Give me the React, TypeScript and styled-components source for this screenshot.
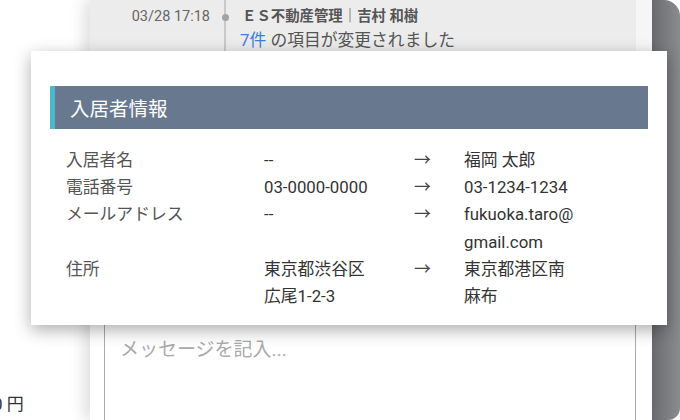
import React from 'react';
import styled, { createGlobalStyle } from 'styled-components';

const GlobalStyle = createGlobalStyle`
  html, body {
    margin: 0;
    padding: 0;
    background: #ffffff;
  }
  body {
    font-family: Roboto, "Noto Sans CJK JP", sans-serif;
  }
`;

const Screen = styled.div`
  position: relative;
  width: 680px;
  height: 420px;
  overflow: hidden;
  display: flex;
  background: #ffffff;
`;

const Backdrop = styled.div`
  width: 90px;
  flex-shrink: 0;
  display: flex;
  flex-direction: column;
  justify-content: flex-end;
  padding-bottom: 4px;
  box-sizing: border-box;
`;

const PriceText = styled.div`
  font-size: 17px;
  line-height: 24px;
  color: #333333;
  margin-left: -7px;
  white-space: nowrap;
`;

const SidePanel = styled.div`
  flex: 1;
  display: flex;
  flex-direction: column;
  background: #ffffff;
  box-shadow: -6px 0 14px rgba(0, 0, 0, 0.13);
  z-index: 1;
`;

const Timeline = styled.div`
  height: 290px;
  flex-shrink: 0;
  background: #ececec;
  border-right: 16px solid #f6f6f6;
  padding-top: 6px;
  box-sizing: border-box;
`;

const TimelineItem = styled.div`
  display: grid;
  grid-template-columns: 120px 24px 1fr;
  column-gap: 3px;
  height: 100%;
`;

const DateCell = styled.div`
  text-align: right;
  font-size: 14.5px;
  line-height: 22px;
  color: #666666;
`;

const Marker = styled.div`
  display: flex;
  justify-content: center;
  margin-top: -6px;
  background: linear-gradient(#c9c9c9, #c9c9c9) center / 2px 100% no-repeat;
`;

const Dot = styled.span`
  width: 7px;
  height: 7px;
  margin-top: 14px;
  border-radius: 50%;
  background: #a3a3a3;
`;

const ItemBody = styled.div`
  display: flex;
  flex-direction: column;
`;

const Author = styled.div`
  font-size: 14.4px;
  line-height: 22px;
  font-weight: bold;
  color: #555555;
  margin-left: 2px;
`;

const ChangeLine = styled.div`
  font-size: 16.8px;
  line-height: 24px;
  color: #555555;
`;

const Count = styled.span`
  color: #3b7fd9;
`;

const MessageArea = styled.div`
  flex: 1;
  display: flex;
  padding: 10px 16px 0 14px;
`;

const MessageInput = styled.textarea`
  flex: 1;
  resize: none;
  border: 1px solid #aaaaaa;
  border-bottom: none;
  padding: 35px 15px 0 15px;
  font-family: Roboto, "Noto Sans CJK JP", sans-serif;
  font-size: 19px;
  line-height: 28px;
  outline: none;
  &::placeholder {
    color: #aaaaaa;
  }
`;

const DarkEdge = styled.div`
  width: 28px;
  flex-shrink: 0;
  background: linear-gradient(to right, #6b6c6f, #8a8b8e);
  border-radius: 0 16px 12px 0;
`;

const Modal = styled.div`
  position: absolute;
  left: 31px;
  top: 51px;
  width: 636px;
  height: 274px;
  box-sizing: border-box;
  padding: 35px 19px 15px 19px;
  background: #ffffff;
  box-shadow: 0 5px 16px rgba(0, 0, 0, 0.32);
  z-index: 2;
`;

const SectionHeader = styled.div`
  height: 43px;
  display: flex;
  align-items: center;
  background: #68788f;
  border-left: 5px solid #4cb8cc;
  padding-left: 15px;
  font-size: 19.5px;
  color: #ffffff;
`;

const ChangeTable = styled.div`
  margin-top: 18px;
  padding-left: 16px;
  display: grid;
  grid-template-columns: 198px 150px 50px 1fr;
  font-size: 16.8px;
  line-height: 27.2px;
`;

const Label = styled.div`
  color: #555555;
`;

const Value = styled.div`
  max-width: 112px;
  color: #333333;
`;

const Arrow = styled.div`
  color: #444444;
`;

type Change = {
  label: string;
  before: React.ReactNode;
  after: React.ReactNode;
};

const changes: Change[] = [
  { label: '入居者名', before: '--', after: '福岡 太郎' },
  { label: '電話番号', before: '03-0000-0000', after: '03-1234-1234' },
  { label: 'メールアドレス', before: '--', after: <>fukuoka.taro@<wbr />gmail.com</> },
  { label: '住所', before: '東京都渋谷区広尾1-2-3', after: '東京都港区南麻布' },
];

const App: React.FC = () => {
  return (
    <>
      <GlobalStyle />
      <Screen>
        <Backdrop>
          <PriceText>0 円</PriceText>
        </Backdrop>
        <SidePanel>
          <Timeline>
            <TimelineItem>
              <DateCell>03/28 17:18</DateCell>
              <Marker>
                <Dot />
              </Marker>
              <ItemBody>
                <Author>ＥＳ不動産管理｜吉村 和樹</Author>
                <ChangeLine>
                  <Count>7件</Count> の項目が変更されました
                </ChangeLine>
              </ItemBody>
            </TimelineItem>
          </Timeline>
          <MessageArea>
            <MessageInput placeholder="メッセージを記入..." />
          </MessageArea>
        </SidePanel>
        <DarkEdge />

        <Modal>
          <SectionHeader>入居者情報</SectionHeader>
          <ChangeTable>
            {changes.map((c) => (
              <React.Fragment key={c.label}>
                <Label>{c.label}</Label>
                <Value>{c.before}</Value>
                <Arrow>→</Arrow>
                <Value>{c.after}</Value>
              </React.Fragment>
            ))}
          </ChangeTable>
        </Modal>
      </Screen>
    </>
  );
};

export default App;
